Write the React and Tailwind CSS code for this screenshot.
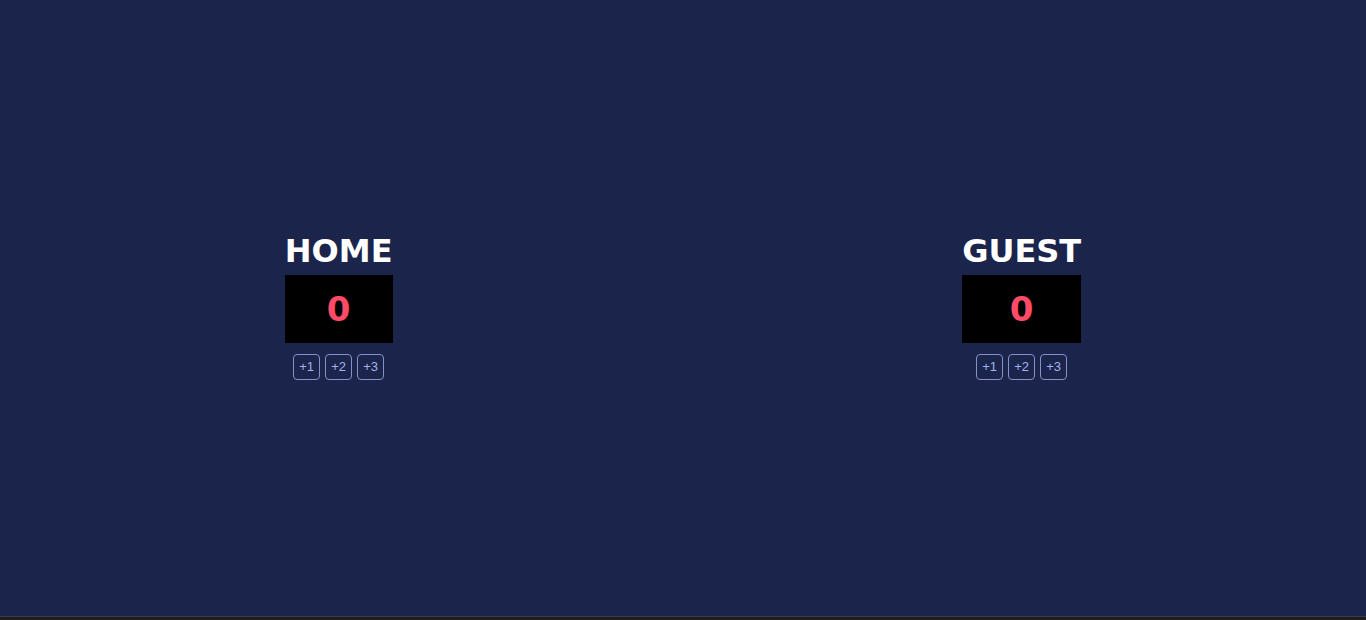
import { useState } from 'react';

function Team({ name, score, onAdd }) {
    return (
        <div className="flex flex-col items-center pt-[2px]">
            <h2 className="text-[32px] leading-[26px] pb-[11px] font-bold text-white" style={{ fontFamily: '"DejaVu Sans", Verdana, sans-serif' }}>
                {name}
            </h2>
            <div className="w-full h-[68px] bg-black flex items-center justify-center">
                <span className="text-[34px] font-bold text-[#ff4a68]" style={{ fontFamily: '"DejaVu Sans", Verdana, sans-serif' }}>
                    {score}
                </span>
            </div>
            <div className="flex gap-[5px] mt-[11px]">
                {[1, 2, 3].map((n) => (
                    <button
                        key={n}
                        onClick={() => onAdd(n)}
                        className="w-[27px] h-[26px] rounded-[4px] border border-[#8391c4] text-[#a3b3ea] text-[13px] flex items-center justify-center"
                        style={{ fontFamily: '"Liberation Sans", Arial, sans-serif' }}
                    >
                        +{n}
                    </button>
                ))}
            </div>
        </div>
    );
}

export default function App() {
    const [home, setHome] = useState(0);
    const [guest, setGuest] = useState(0);

    return (
        <div className="h-[620px] bg-[#1e1e1e] flex flex-col">
            <div className="h-[617px] bg-[#1b244a] border-b border-[#3d3d45] flex items-center justify-around">
                <Team name="HOME" score={home} onAdd={(n) => setHome(home + n)} />
                <Team name="GUEST" score={guest} onAdd={(n) => setGuest(guest + n)} />
            </div>
        </div>
    );
}
